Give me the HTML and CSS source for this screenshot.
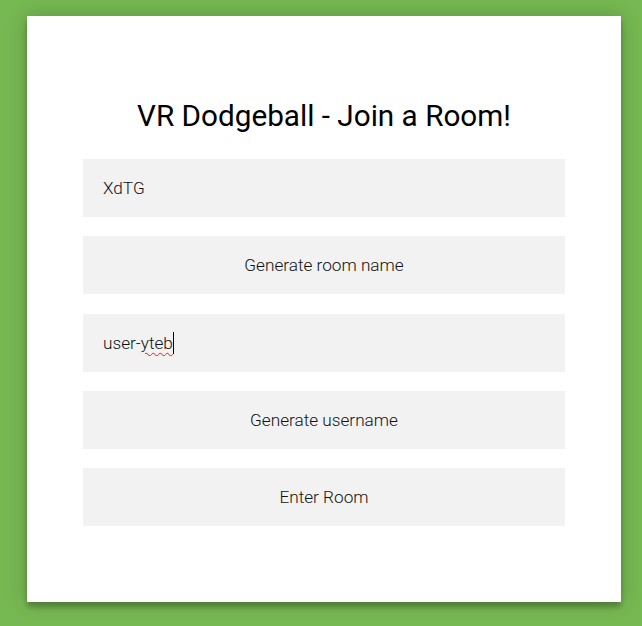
FILE: index.html
```html
<!DOCTYPE html>
<html>
<head>
<meta charset="utf-8">
<link rel="stylesheet" href="styles.css">
</head>
<body>
<div class="page">
  <div class="card">
    <h1 class="title">VR Dodgeball - Join a Room!</h1>
    <div class="field">XdTG</div>
    <div class="field button">Generate room name</div>
    <div class="field">user-<span class="misspelled">yteb</span><span class="caret"></span></div>
    <div class="field button">Generate username</div>
    <div class="field button">Enter Room</div>
  </div>
</div>
</body>
</html>
```
FILE: styles.css
```css
html, body {
  margin: 0;
  padding: 0;
  height: 100%;
}
body {
  background: #76b852;
  font-family: Roboto, "Liberation Sans", sans-serif;
  overflow: hidden;
}
.page {
  padding-top: 16px;
  padding-left: 27px;
}
.card {
  width: 594px;
  height: 586px;
  box-sizing: border-box;
  background: #ffffff;
  padding: 0 56px;
  box-shadow: 0 0 20px 0 rgba(0,0,0,0.2), 0 5px 5px 0 rgba(0,0,0,0.24);
  display: flex;
  flex-direction: column;
}
.title {
  margin: 85px 0 28px;
  font-weight: 400;
  font-size: 29.7px;
  line-height: 30px;
  text-align: center;
  color: #000;
}
.field {
  height: 58px;
  margin-bottom: 19.25px;
  background: #f2f2f2;
  padding: 0 20px;
  display: flex;
  align-items: center;
  font-size: 17.2px;
  font-weight: 300;
  color: #111;
  flex-shrink: 0;
}
.button {
  justify-content: center;
}
.misspelled {
  text-decoration: underline wavy #e0201e;
  text-decoration-thickness: 1px;
  text-underline-offset: 3px;
}
.caret {
  display: inline-block;
  width: 1px;
  height: 22px;
  background: #000;
}
```
